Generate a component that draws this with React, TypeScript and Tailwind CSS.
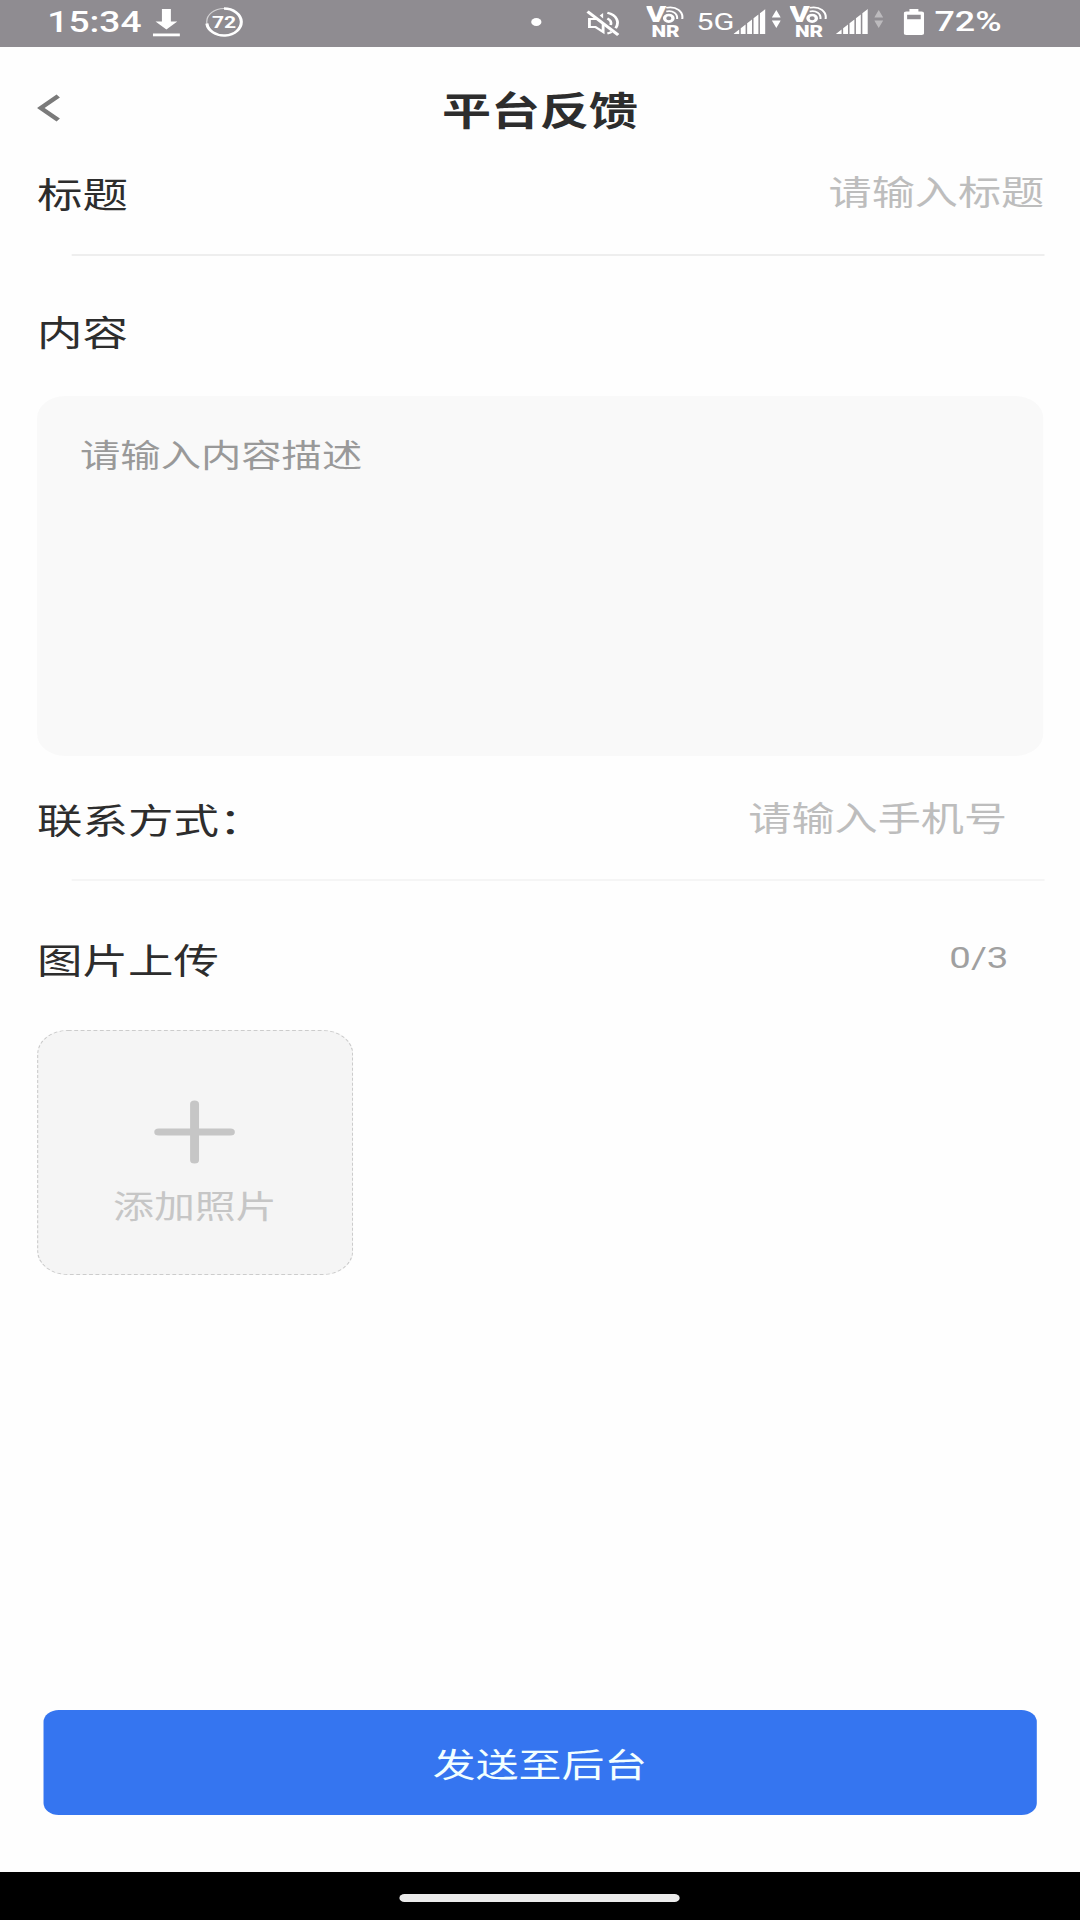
import { useState } from 'react';

function DownloadIcon() {
  return (
    <svg viewBox="0 0 22 28" className="h-[28px] w-[22px]" fill="currentColor">
      <path d="M7.5 0h7v12.5h5L11 20.5 2.500 12.500h5z" />
      <rect x="0.500" y="24.500" width="21" height="2.800" />
    </svg>
  );
}

function SpeedRing() {
  return (
    <svg viewBox="0 0 30 30" className="h-[30px] w-[30px]" fill="none" stroke="currentColor">
      <circle cx="15" cy="15" r="13.500" strokeWidth="1" opacity="0.6" />
      <path d="M15 1.500A13.500 13.500 0 1 1 1.600 16.500" strokeWidth="2.400" />
      <text x="15" y="21" textAnchor="middle" fontSize="16.500" fontWeight="700" fill="currentColor" stroke="none">
        72
      </text>
    </svg>
  );
}

function MuteIcon() {
  return (
    <svg viewBox="0 0 26 26" className="h-[26px] w-[26px]" fill="none" stroke="currentColor" strokeWidth="2.200">
      <path d="M8 9H2.500v8h4.700l6 5v-8.500" />
      <path d="M10.500 5.500 13.200 3v5.500z" fill="currentColor" stroke="none" />
      <path d="M16.500 8.500a5.500 5.500 0 0 1 2.600 6.500" />
      <path d="M16.500 2.800c7.500 2.200 9.700 9.500 6.500 15.500" />
      <path d="M19.800 21.800a11 11 0 0 1-3.300 1.700" />
      <path d="M1 1.500 25 25" strokeWidth="2.600" />
    </svg>
  );
}

function VoNrIcon() {
  return (
    <svg viewBox="0 0 30 32" className="h-[32px] w-[30px]" fill="none" stroke="currentColor">
      <g fill="currentColor" stroke="none" fontWeight="900">
        <text x="-0.500" y="16" fontSize="22" textLength="16" lengthAdjust="spacingAndGlyphs">V</text>
        <text x="4" y="31" fontSize="16" textLength="22" lengthAdjust="spacingAndGlyphs">NR</text>
      </g>
      <circle cx="17.500" cy="12.300" r="3.300" strokeWidth="2.600" />
      <path d="M15.500 5.500c5-1.400 9 2 8.500 7.500" strokeWidth="1.600" />
      <path d="M15.500 1.800c8-2 13.500 4 12.500 11.200" strokeWidth="1.600" />
    </svg>
  );
}

function SignalIcon() {
  return (
    <svg viewBox="0 0 25 25" className="h-[25px] w-[25px]" fill="currentColor">
      <path d="M0 25 4.500 20.500V25zM5.700 19.300 9.500 15.500V25H5.700zM10.700 14.300 14.500 10.500V25h-3.800zM15.700 9.300 19.500 5.500V25h-3.800zM20.700 4.300 25 0v25h-4.300z" />
    </svg>
  );
}

function DataArrows({ className = '' }: { className?: string }) {
  return (
    <svg viewBox="0 0 7 18" className={`h-[18px] w-[7px] ${className}`} fill="currentColor">
      <path d="M3.500 0 7 7.500H0zM0 10.500h7L3.500 18z" />
    </svg>
  );
}

function BatteryIcon() {
  return (
    <svg viewBox="0 0 16 26" className="h-[26px] w-[16px]">
      <path
        fill="currentColor"
        fillRule="evenodd"
        d="M4.500 0h7v2.500h2.500a2 2 0 0 1 2 2V24a2 2 0 0 1-2 2H2a2 2 0 0 1-2-2V4.500a2 2 0 0 1 2-2h2.500zM2.700 5.800v4.400h10.600V5.800z"
      />
    </svg>
  );
}

function StatusBar() {
  return (
    <div className="flex h-[47px] items-start bg-[#8f8c91] pl-[37px] font-[Roboto,sans-serif] leading-none text-white">
      <span className="mt-[8px] w-[82px] text-[29px] font-medium">15:34</span>
      <div className="mt-[9px] w-[41px]"><DownloadIcon /></div>
      <div className="mt-[7px] w-[255px]"><SpeedRing /></div>
      <div className="mt-[18px] mr-[35px] h-[8px] w-[8px] rounded-full bg-white" />
      <div className="mt-[10px] w-[47px]"><MuteIcon /></div>
      <div className="mt-[6px] w-[39px]"><VoNrIcon /></div>
      <span className="mt-[10px] w-[29px] text-[24px]">5G</span>
      <div className="mt-[9px] w-[30px]"><SignalIcon /></div>
      <div className="mt-[10px] w-[14px]"><DataArrows /></div>
      <div className="mt-[6px] w-[36px]"><VoNrIcon /></div>
      <div className="mt-[9px] w-[30px]"><SignalIcon /></div>
      <div className="mt-[10px] w-[23px]"><DataArrows className="opacity-40" /></div>
      <div className="mt-[9px] w-[24px]"><BatteryIcon /></div>
      <span className="mt-[8px] text-[28px] font-medium">72%</span>
    </div>
  );
}

export default function App() {
  const [title, setTitle] = useState('');
  const [content, setContent] = useState('');
  const [phone, setPhone] = useState('');

  return (
    <div className="h-[1920px] w-[1080px] overflow-hidden bg-white">
      {/* the whole screen is a tall phone layout, widened to fill the frame */}
      <div className="flex h-full w-[843.75px] origin-top-left scale-x-[1.28] flex-col bg-[#fefefe] font-['Noto_Sans_CJK_SC',sans-serif] text-[#2d2d2d]">
        <StatusBar />

        {/* Header */}
        <header className="grid h-[103px] grid-cols-[80px_1fr_80px] pt-[35px]">
          <button className="mt-[12px] ml-[29px] h-[28px] w-[18px] text-[#7a7a7a]">
            <svg viewBox="0 0 18 28" className="h-[28px] w-[18px]" fill="none" stroke="currentColor" strokeWidth="4">
              <path d="M16.500 2 2.800 14l13.700 12" />
            </svg>
          </button>
          <h1 className="text-center text-[38.3px] leading-[54px] font-bold">平台反馈</h1>
        </header>

        {/* Title field */}
        <div className="flex h-[104px] items-start justify-between pr-[28px] pl-[29px]">
          <label htmlFor="title" className="mt-[18px] text-[35.500px] leading-[50px]">标题</label>
          <input
            id="title"
            value={title}
            onChange={(e) => setTitle(e.target.value)}
            placeholder="请输入标题"
            className="mt-[16px] h-[50px] w-[400px] text-right text-[33.700px] leading-[50px] outline-none placeholder:text-[#bdbdbd]"
          />
        </div>
        <div className="mr-[28px] ml-[56px] h-[2px] bg-[#eeeeee]" />

        {/* Content field */}
        <label htmlFor="content" className="mt-[50px] ml-[29px] text-[35.500px] leading-[50px]">内容</label>
        <textarea
          id="content"
          value={content}
          onChange={(e) => setContent(e.target.value)}
          placeholder="请输入内容描述"
          className="mx-[28.500px] mt-[40px] h-[360px] resize-none rounded-[22px] bg-[#f9f9f9] px-[34px] pt-[32px] text-[31.500px] leading-[50px] outline-none placeholder:text-[#999999]"
        />

        {/* Contact field */}
        <div className="flex h-[123px] items-start justify-between pr-[57px] pl-[29px]">
          <label htmlFor="phone" className="mt-[38px] text-[35.500px] leading-[50px]">联系方式：</label>
          <input
            id="phone"
            value={phone}
            onChange={(e) => setPhone(e.target.value)}
            placeholder="请输入手机号"
            className="mt-[36px] h-[50px] w-[400px] text-right text-[33.700px] leading-[50px] outline-none placeholder:text-[#bdbdbd]"
          />
        </div>
        <div className="mr-[28px] ml-[56px] h-[2px] bg-[#f5f5f5]" />

        {/* Photo upload */}
        <div className="flex h-[149px] items-start justify-between pr-[56px] pl-[29px]">
          <span className="mt-[53px] text-[35.500px] leading-[50px]">图片上传</span>
          <span className="mt-[52px] font-[Roboto,sans-serif] text-[30px] leading-[50px] text-[#a0a0a0]">0/3</span>
        </div>
        <button className="ml-[28.500px] flex h-[245px] w-[247.500px] flex-col items-center rounded-[24px] border border-dashed border-[#cccccc] bg-[#f5f5f5] text-[#c6c6c6]">
          <svg viewBox="0 0 64 64" className="mt-[69px] h-[64px] w-[64px]" fill="none" stroke="currentColor" strokeWidth="7" strokeLinecap="round">
            <path d="M32 4v56M4 32h56" />
          </svg>
          <span className="mt-[15px] text-[32px] leading-[50px]">添加照片</span>
        </button>

        {/* Submit */}
        <button className="mx-[33.500px] mt-auto mb-[57px] h-[105px] rounded-[12px] bg-[#3575f0] text-[33.500px] leading-[105px] text-[#f2ffff]">
          发送至后台
        </button>

        {/* Gesture bar */}
        <div className="flex h-[48px] items-center justify-center bg-black pb-[-4px]">
          <div className="mt-[4px] h-[8px] w-[219px] rounded-full bg-[#ebebeb]" />
        </div>
      </div>
    </div>
  );
}
